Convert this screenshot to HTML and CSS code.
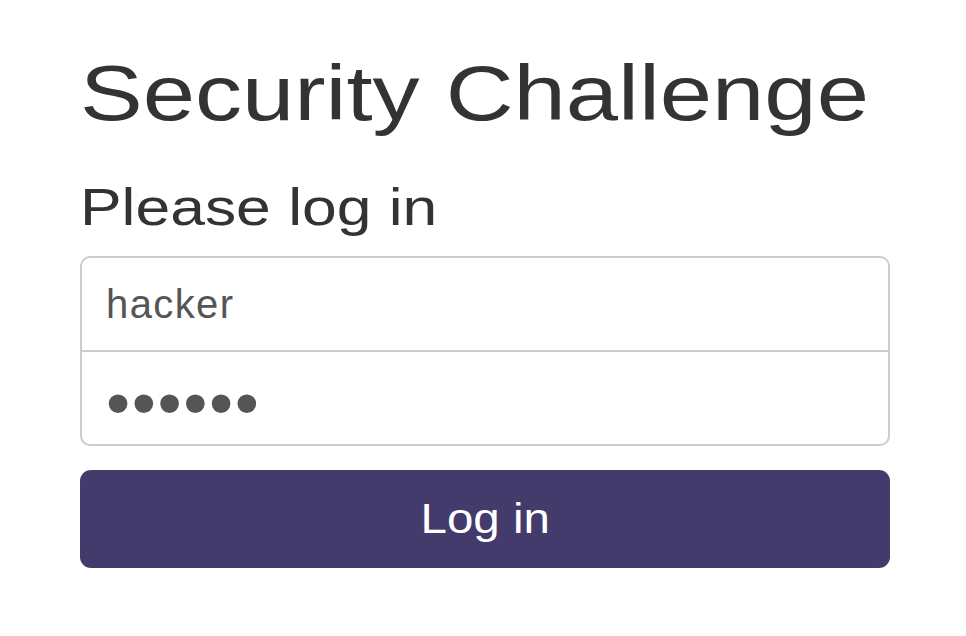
FILE: index.html
```html
<!DOCTYPE html>
<html lang="en">
<head>
<meta charset="utf-8">
<title>Security Challenge</title>
<link rel="stylesheet" href="styles.css">
</head>
<body>
<main class="signin">
  <h1 class="title"><span class="stretch">Security Challenge</span></h1>
  <h3 class="subtitle"><span class="stretch stretch-sub">Please log in</span></h3>
  <form class="form">
    <input class="field field-top" type="text" value="hacker" aria-label="Username">
    <input class="field field-bottom" type="password" value="secret" aria-label="Password">
    <button class="btn" type="button"><span class="stretch-btn">Log in</span></button>
  </form>
</main>
</body>
</html>
```

FILE: styles.css
```css
html, body {
  margin: 0;
  padding: 0;
  background: #fff;
}

body {
  font-family: "Liberation Sans", Arial, sans-serif;
  color: #333;
}

.signin {
  width: 810px;
  padding-left: 80px;
}

.title {
  margin: 54px 0 0;
  font-size: 78px;
  line-height: 1;
  font-weight: 400;
  white-space: nowrap;
}

.subtitle {
  margin: 49px 0 0;
  font-size: 52px;
  line-height: 1;
  font-weight: 400;
  white-space: nowrap;
}

.stretch {
  display: inline-block;
  transform: scaleX(1.205);
  transform-origin: 0 50%;
}

.stretch-sub {
  transform: scaleX(1.2);
}

.form {
  margin-top: 23px;
  display: flex;
  flex-direction: column;
}

.field {
  box-sizing: border-box;
  width: 810px;
  height: 96px;
  margin: 0;
  padding: 0 24px;
  border: 2px solid #ccc;
  background: #fff;
  font-family: "Liberation Sans", Arial, sans-serif;
  font-size: 40px;
  letter-spacing: 1.4px;
  color: #555;
  outline: none;
}

.field-top {
  border-radius: 10px 10px 0 0;
}

.field-bottom {
  margin-top: -2px;
  border-radius: 0 0 10px 10px;
  font-size: 69px;
  letter-spacing: 1.6px;
  padding-top: 8px;
}

.btn {
  box-sizing: border-box;
  width: 810px;
  height: 98px;
  margin-top: 24px;
  border: 0;
  border-radius: 11px;
  background: #433b6b;
  color: #fff;
  font-family: "Liberation Sans", Arial, sans-serif;
  font-size: 42px;
  padding: 0;
}

.stretch-btn {
  display: inline-block;
  transform: scaleX(1.13);
}
```
